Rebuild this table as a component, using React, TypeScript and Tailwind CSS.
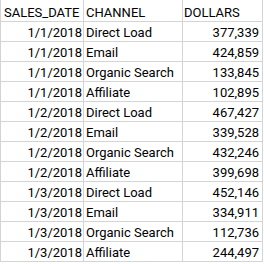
const rows: [string, string, string][] = [
  ['1/1/2018', 'Direct Load', '377,339'],
  ['1/1/2018', 'Email', '424,859'],
  ['1/1/2018', 'Organic Search', '133,845'],
  ['1/1/2018', 'Affiliate', '102,895'],
  ['1/2/2018', 'Direct Load', '467,427'],
  ['1/2/2018', 'Email', '339,528'],
  ['1/2/2018', 'Organic Search', '432,246'],
  ['1/2/2018', 'Affiliate', '399,698'],
  ['1/3/2018', 'Direct Load', '452,146'],
  ['1/3/2018', 'Email', '334,911'],
  ['1/3/2018', 'Organic Search', '112,736'],
  ['1/3/2018', 'Affiliate', '244,497'],
]

export default function App() {
  return (
    <div className="w-[264px] h-[264px] bg-white overflow-hidden text-[13px] text-black font-['Roboto',sans-serif]">
      <div className="grid grid-cols-[83px_99px_80px] border-l border-[#d4d4d4] w-[263px]">
        {/* header */}
        <div className="h-[22px] border-r border-b border-[#d4d4d4] pl-[3px] leading-[26px] whitespace-nowrap overflow-hidden">SALES_DATE</div>
        <div className="h-[22px] border-r border-b border-[#d4d4d4] pl-[2px] leading-[26px]">CHANNEL</div>
        <div className="h-[22px] border-r border-b border-[#d4d4d4] pl-[1px] leading-[26px]">DOLLARS</div>

        {rows.map(([date, channel, dollars], i) => (
          <div key={i} className="contents">
            <div className="h-[20px] border-r border-b border-[#d4d4d4] pr-[1px] text-right leading-[22px]">{date}</div>
            <div className="h-[20px] border-r border-b border-[#d4d4d4] pl-[2px] leading-[22px] whitespace-nowrap">{channel}</div>
            <div className="h-[20px] border-r border-b border-[#d4d4d4] pr-[3px] text-right leading-[22px]">{dollars}</div>
          </div>
        ))}
      </div>
    </div>
  )
}
